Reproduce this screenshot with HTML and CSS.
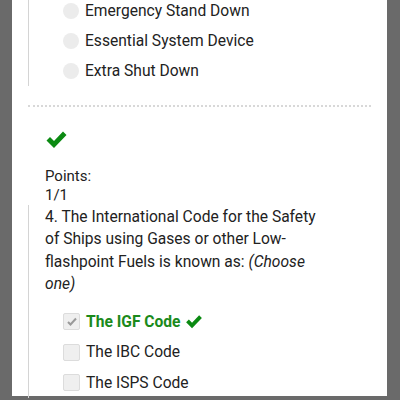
FILE: index.html
```html
<!DOCTYPE html>
<html lang="en">
<head>
    <meta charset="UTF-8">
    <meta name="viewport" content="width=device-width, initial-scale=1.0">
    <title>Quiz Results</title>
    <link rel="stylesheet" href="styles.css">
</head>
<body>
    <div class="page">
        <div class="question first">
            <ul class="options">
                <li><span class="radio"></span>Emergency Stand Down</li>
                <li><span class="radio"></span>Essential System Device</li>
                <li><span class="radio"></span>Extra Shut Down</li>
            </ul>
        </div>

        <hr class="divider">

        <div class="result">
            <svg class="mark" width="23" height="19" viewBox="0 0 22 19">
                <path d="M1 10.5 L4.5 7 L8.5 11 L17.5 1.5 L21 5 L8.5 18 Z" fill="#0b8a12"/>
            </svg>
            <div class="points">Points:<br>1/1</div>
        </div>

        <div class="question">
            <p class="text">4. The International Code for the Safety of Ships using Gases or other Low-flashpoint Fuels is known as: <em>(Choose one)</em></p>
            <ul class="options">
                <li class="correct">
                    <span class="box checked">
                        <svg width="10" height="9" viewBox="0 0 10 9"><path d="M1 5 L3.5 7.5 L9 1.5" fill="none" stroke="#9a9a9a" stroke-width="2"/></svg>
                    </span>The IGF Code
                    <svg class="tick" width="18" height="15" viewBox="0 0 22 19">
                        <path d="M1 10.5 L4.5 7 L8.5 11 L17.5 1.5 L21 5 L8.5 18 Z" fill="#0b8a12"/>
                    </svg>
                </li>
                <li><span class="box"></span>The IBC Code</li>
                <li><span class="box"></span>The ISPS Code</li>
            </ul>
        </div>
    </div>
</body>
</html>
```

FILE: styles.css
```css
body {
    margin: 0;
    background-color: #6a6a6a;
    font-family: Roboto, 'Noto Sans', sans-serif;
    font-size: 15.6px;
    color: #222;
    height: 400px;
    overflow: hidden;
}
.page {
    background-color: white;
    margin: 0 13px 0 12px;
    height: 400px;
    padding: 0 16px 0 16px;
}
.question {
    border-left: 1px solid #d4d4d4;
    padding-left: 16px;
}
.question.first {
    margin-top: -4px;
}
.options {
    list-style: none;
    margin: 0;
    padding: 0;
}
.options li {
    display: flex;
    align-items: center;
    height: 30px;
}
.question:not(.first) .options li {
    height: 30.5px;
}
.radio {
    width: 16px;
    height: 16px;
    border-radius: 50%;
    background-color: #ececec;
    margin: 0 6px 0 18px;
}
.box {
    width: 15px;
    height: 15px;
    border: 1px solid #dcdcdc;
    border-radius: 2px;
    background-color: #efefef;
    margin: 0 6px 0 18px;
    display: flex;
    align-items: center;
    justify-content: center;
}
.divider {
    border: none;
    border-top: 2px dotted #d8d8d8;
    margin: 19px 0 0 0;
}
.result {
    padding: 23px 0 0 17px;
}
.mark {
    display: block;
}
.points {
    margin-top: 18px;
    line-height: 19px;
    font-size: 15px;
}
.question .text {
    margin: 0;
    padding: 1px 40px 11px 0;
    line-height: 22.4px;
}
.correct {
    color: #1b8a1b;
    font-weight: bold;
}
.tick {
    margin-left: 4px;
}
```
